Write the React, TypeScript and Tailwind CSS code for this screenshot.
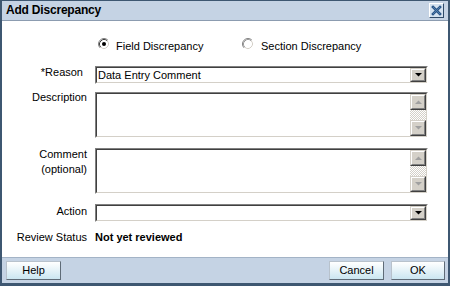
import React from "react";

function Radio({ checked }: { checked?: boolean }) {
  return (
    <svg width="12" height="12" viewBox="0 0 12 12" className="shrink-0">
      <circle cx="6" cy="6" r="5" fill="#fff" />
      <path d="M2.11 9.89 A5.5 5.5 0 0 1 9.89 2.11" stroke="#808080" strokeWidth="1" fill="none" />
      <path d="M9.89 2.11 A5.5 5.5 0 0 1 2.11 9.89" stroke="#ffffff" strokeWidth="1" fill="none" />
      <path d="M2.82 9.18 A4.5 4.5 0 0 1 9.18 2.82" stroke={checked ? "#404040" : "#9a9a9a"} strokeWidth="1" fill="none" />
      <path d="M9.18 2.82 A4.5 4.5 0 0 1 2.82 9.18" stroke="#d4d0c8" strokeWidth="1" fill="none" />
      {checked && <circle cx="6" cy="6" r="2" fill="#000" />}
    </svg>
  );
}

function Raised({ children, className }: { children?: React.ReactNode; className?: string }) {
  return (
    <div className={"border border-t-[#d4d0c8] border-l-[#d4d0c8] border-r-[#404040] border-b-[#404040] " + (className || "")}>
      <div className="w-full h-full border border-t-white border-l-white border-r-[#808080] border-b-[#808080] bg-[#d4d0c8] flex items-center justify-center">
        {children}
      </div>
    </div>
  );
}

function Arrow({ up, color }: { up?: boolean; color: string }) {
  return (
    <svg width="7" height="4" viewBox="0 0 7 4">
      {up ? <path d="M0 4 L7 4 L3.5 0.5 Z" fill={color} /> : <path d="M0 0 L7 0 L3.5 3.5 Z" fill={color} />}
    </svg>
  );
}

function Inset({ children, className }: { children?: React.ReactNode; className?: string }) {
  return (
    <div className={"border border-t-[#808080] border-l-[#808080] border-r-white border-b-white " + (className || "")}>
      <div className="w-full h-full border border-t-[#404040] border-l-[#404040] border-r-[#d4d0c8] border-b-[#d4d0c8] bg-white flex">
        {children}
      </div>
    </div>
  );
}

function Select({ value }: { value?: string }) {
  return (
    <Inset className="w-[333px] h-[18px]">
      <div className="flex-1 pl-[1px] leading-[14px] text-[11px] text-black">{value}</div>
      <Raised className="w-[16px] h-[14px]">
        <Arrow color="#000" />
      </Raised>
    </Inset>
  );
}

function TextArea() {
  return (
    <Inset className="w-[333px] h-[46px]">
      <div className="flex-1" />
      <div className="w-[16px] h-full flex flex-col">
        <Raised className="w-[16px] h-[16px]">
          <Arrow up color="#a0a0a0" />
        </Raised>
        <div className="flex-1 bg-[repeating-conic-gradient(#d4d0c8_0%_25%,#ffffff_0%_50%)] bg-[length:2px_2px]" />
        <Raised className="w-[16px] h-[16px]">
          <Arrow color="#a0a0a0" />
        </Raised>
      </div>
    </Inset>
  );
}

function Btn({ label, w }: { label: string; w: string }) {
  return (
    <div
      className={
        w +
        " h-[19px] border border-t-[#b8c2cc] border-l-[#b8c2cc] border-r-[#5f6b77] border-b-[#5f6b77] bg-gradient-to-b from-white to-[#cbe6f1] flex items-center justify-center text-[11px] text-black"
      }
    >
      {label}
    </div>
  );
}

export default function App() {
  return (
    <div className="w-[450px] h-[286px] border-t border-x-2 border-b-[3px] border-[#3e5771] flex flex-col bg-white font-['Liberation_Sans',Arial,sans-serif] text-black">
      {/* title bar */}
      <div className="h-[20px] shrink-0 bg-[#c5d3e4] border-b border-[#8c9cb0] flex items-center justify-between pl-[4px] pr-[4px]">
        <div className="text-[12px] font-bold leading-[19px] tracking-[-0.2px]">Add Discrepancy</div>
        <div className="w-[15px] h-[15px] border border-t-white border-l-white border-r-[#2f4a68] border-b-[#2f4a68] bg-[#d3e1ef] flex items-center justify-center">
          <svg width="11" height="11" viewBox="0 0 11 11">
            <path d="M2 2 L9 9 M9 2 L2 9" stroke="#2a5688" strokeWidth="2.6" strokeLinecap="square" />
            <path d="M2 2 L9 9 M9 2 L2 9" stroke="#5b86b4" strokeWidth="0.8" />
          </svg>
        </div>
      </div>

      {/* content */}
      <div className="flex-1 flex flex-col text-[11px]">
        <div className="mt-[17px] h-[15px] flex items-start pl-[96px]">
          <div className="w-[144px] flex items-start gap-[6px]">
            <Radio checked />
            <span className="leading-[15px] pt-[1px]">Field Discrepancy</span>
          </div>
          <div className="flex items-start gap-[7px]">
            <Radio />
            <span className="leading-[15px] pt-[1px]">Section Discrepancy</span>
          </div>
        </div>

        <div className="mt-[13px] grid grid-cols-[85px_333px] gap-x-[8px]">
          <div className="text-right leading-[15px] -mt-[1px] pr-[4px]">*Reason</div>
          <Select value="Data Entry Comment" />
        </div>

        <div className="mt-[8px] grid grid-cols-[85px_333px] gap-x-[8px]">
          <div className="text-right leading-[15px] -mt-[2px]">Description</div>
          <TextArea />
        </div>

        <div className="mt-[10px] grid grid-cols-[85px_333px] gap-x-[8px]">
          <div className="text-right leading-[15px] -mt-[1px]">
            Comment
            <br />
            (optional)
          </div>
          <TextArea />
        </div>

        <div className="mt-[10px] grid grid-cols-[85px_333px] gap-x-[8px]">
          <div className="text-right leading-[15px]">Action</div>
          <Select />
        </div>

        <div className="mt-[8px] grid grid-cols-[85px_333px] gap-x-[8px] leading-[15px]">
          <div className="text-right">Review Status</div>
          <div className="font-bold">Not yet reviewed</div>
        </div>
      </div>

      {/* footer */}
      <div className="h-[26px] shrink-0 bg-[#c5d3e4] border-t border-[#a3b3c6] flex items-start justify-between pt-[3px] pl-[4px] pr-[3px]">
        <Btn label="Help" w="w-[55px]" />
        <div className="flex gap-[7px]">
          <Btn label="Cancel" w="w-[55px]" />
          <Btn label="OK" w="w-[54px]" />
        </div>
      </div>
    </div>
  );
}
